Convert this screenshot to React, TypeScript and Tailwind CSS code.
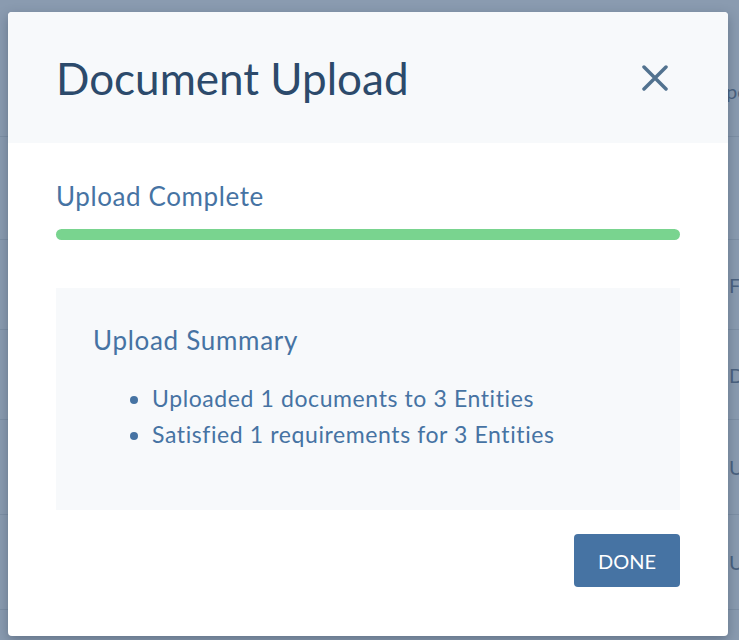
import React from "react";

const bgRows = [
  { label: "F", height: "h-[90px]" },
  { label: "D", height: "h-[90px]" },
  { label: "U", height: "h-[95px]" },
  { label: "U", height: "h-[95px]" },
];

export default function App() {
  return (
    <main className="relative h-[640px] w-[739px] overflow-hidden bg-[#8a9bb0] font-['Lato',sans-serif]">
      {/* page behind the overlay */}
      <div className="flex flex-col text-[20px] text-[#4b6280]">
        <div className="grid h-[137px] grid-cols-[726px_1fr] items-end border-b border-[#7d8fa5] pb-[30px]">
          <div />
          <span>pe</span>
        </div>
        <div className="h-[103px] border-b border-[#7d8fa5]" />
        {bgRows.map((row, i) => (
          <div key={i} className={`grid ${row.height} grid-cols-[729px_1fr] items-center border-b border-[#7d8fa5]`}>
            <div />
            <span>{row.label}</span>
          </div>
        ))}
      </div>

      {/* modal */}
      <div className="absolute inset-0 pl-2 pt-3">
        <div className="flex h-[624px] w-[720px] flex-col overflow-hidden rounded bg-white shadow-[0_4px_12px_rgba(30,45,65,0.35)]">
          <div className="flex h-[131px] items-center justify-between bg-[#f7f9fb] pl-12 pr-[60px]">
            <h2 className="text-[44px] leading-none text-[#2c4a6b]">Document Upload</h2>
            <svg width="26" height="26" viewBox="0 0 26 26" fill="none" stroke="#52728f" strokeWidth="3.5" strokeLinecap="round">
              <path d="M2 2L24 24M24 2L2 24" />
            </svg>
          </div>

          <div className="flex flex-1 flex-col px-12 pt-[39px] pb-12">
            <h3 className="text-[26px] leading-[28px] tracking-[0.6px] text-[#4673a3]">Upload Complete</h3>
            <div className="mt-[19px] h-[11px] w-full rounded-full bg-[#79d48f]" />

            <div className="mt-12 h-[222px] bg-[#f7f9fb] px-[37px] pt-[38px]">
              <h4 className="text-[26px] leading-[28px] tracking-[0.7px] text-[#4673a3]">Upload Summary</h4>
              <ul className="mt-[26px] list-disc pl-[59px] text-[23px] leading-[36px] tracking-[0.6px] text-[#4673a3] marker:text-[#4673a3]">
                <li>Uploaded 1 documents to 3 Entities</li>
                <li>Satisfied 1 requirements for 3 Entities</li>
              </ul>
            </div>

            <div className="mt-6 flex justify-end">
              <button className="h-[53px] w-[106px] rounded bg-[#4673a3] text-[20px] text-white">DONE</button>
            </div>
          </div>
        </div>
      </div>
    </main>
  );
}
